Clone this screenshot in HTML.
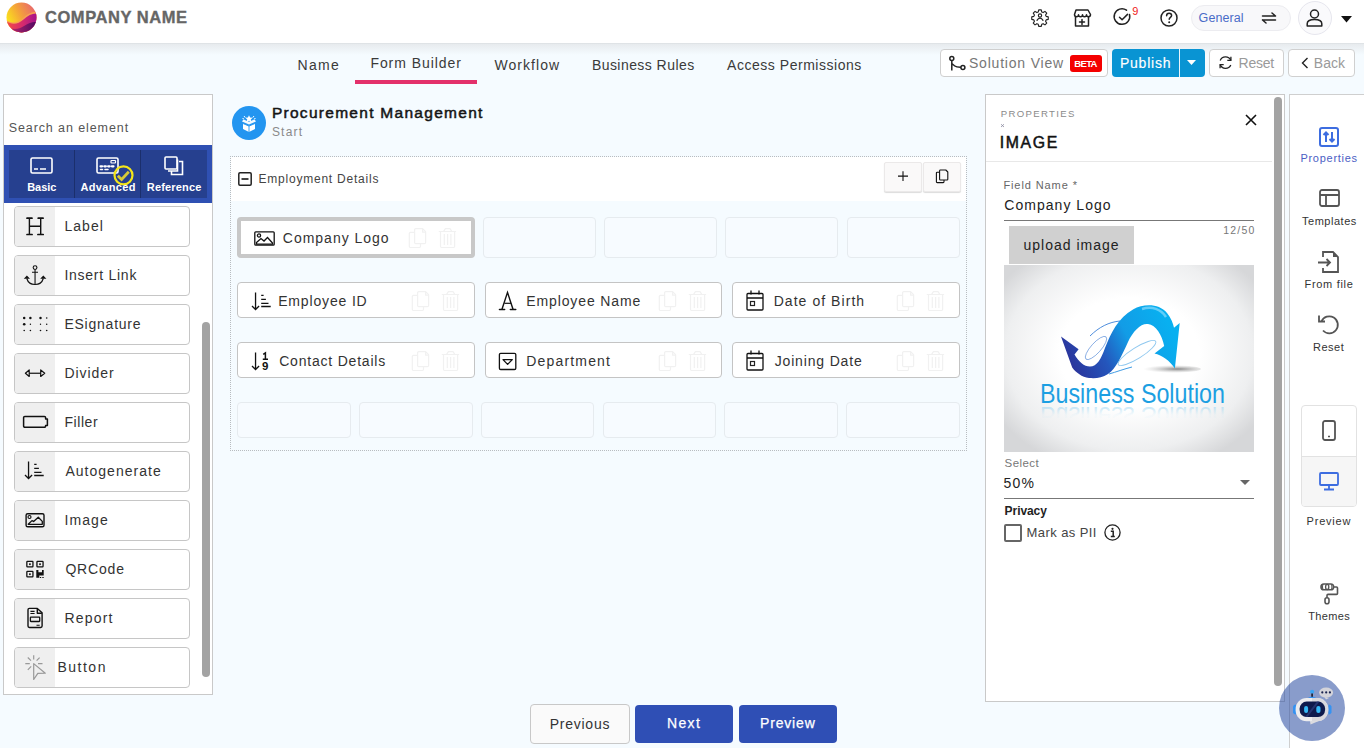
<!DOCTYPE html><html><head><meta charset="utf-8"><title>Form Builder</title><style>
*{box-sizing:border-box;margin:0;padding:0}
html,body{width:1364px;height:748px;overflow:hidden;background:#f5fbff;font-family:"Liberation Sans",sans-serif;position:relative}
.a{position:absolute}
.t{position:absolute;white-space:nowrap;line-height:1}
svg{position:absolute;overflow:visible}
</style></head><body>
<div class="a" style="left:0;top:0;width:1364px;height:43px;background:#fff"></div>
<div class="a" style="left:0;top:43px;width:1364px;height:1px;background:#dfe3e6"></div>
<div class="a" style="left:0;top:44px;width:1364px;height:11px;background:linear-gradient(#e7ebee,#f5fbff)"></div>
<svg style="left:6px;top:2px" width="31" height="31" viewBox="0 0 31 31">
<defs>
<linearGradient id="lg1" x1="0" y1="0.6" x2="1" y2="0.1"><stop offset="0" stop-color="#fbe81a"/><stop offset="0.45" stop-color="#f4a23a"/><stop offset="1" stop-color="#e65a78"/></linearGradient>
<linearGradient id="lg2" x1="0" y1="0" x2="1" y2="0"><stop offset="0" stop-color="#f54b45"/><stop offset="0.55" stop-color="#d52a6e"/><stop offset="1" stop-color="#a4128e"/></linearGradient>
<linearGradient id="lg3" x1="0" y1="0" x2="1" y2="0"><stop offset="0" stop-color="#c8286e"/><stop offset="1" stop-color="#4e0a62"/></linearGradient>
<clipPath id="lc"><circle cx="15.5" cy="15.5" r="15"/></clipPath>
</defs>
<g clip-path="url(#lc)">
<rect width="31" height="31" fill="url(#lg1)"/>
<path d="M0 18 C6 22 12 21 17 16 C22 11 27 9.5 31 10 L31 31 L0 31Z" fill="#f7a052"/>
<path d="M0 19.2 C6 23 12 22.5 17.5 17.5 C22 13 27 11 31 11.5 L31 31 L0 31Z" fill="url(#lg2)"/>
<path d="M0 24 C6 28 12 28 18 24 C23 20.5 27 19.5 31 20 L31 31 L0 31Z" fill="url(#lg3)"/>
</g></svg>
<div class="t" style="left:45.00px;top:8.72px;font-size:16.5px;font-weight:bold;color:#666;letter-spacing:0.545px;-webkit-text-stroke:0.35px #666;">COMPANY NAME</div>
<svg style="left:1031px;top:8px" width="18" height="18" viewBox="0 0 24 24"><path stroke="#222" stroke-width="1.5" fill="none" stroke-linecap="round" stroke-linejoin="round" d="M10.3 2.5h3.4l.6 2.8 1.9.8 2.4-1.6 2.4 2.4-1.6 2.4.8 1.9 2.8.6v3.4l-2.8.6-.8 1.9 1.6 2.4-2.4 2.4-2.4-1.6-1.9.8-.6 2.8h-3.4l-.6-2.8-1.9-.8-2.4 1.6-2.4-2.4 1.6-2.4-.8-1.9-2.8-.6v-3.4l2.8-.6.8-1.9-1.6-2.4 2.4-2.4 2.4 1.6 1.9-.8z"/><circle stroke="#222" stroke-width="1.5" fill="none" stroke-linecap="round" stroke-linejoin="round" cx="12" cy="10" r="2.2"/><path stroke="#222" stroke-width="1.5" fill="none" stroke-linecap="round" stroke-linejoin="round" d="M8 16.5c1-2 2.3-3 4-3s3 1 4 3"/></svg>
<svg style="left:1072px;top:9px" width="20" height="18" viewBox="0 0 20 18"><path stroke="#222" stroke-width="1.5" fill="none" stroke-linecap="round" stroke-linejoin="round" d="M4 1h12l2.5 4.5c0 1.5-1 2.2-2 2.2s-2-.8-2-2c0 1.2-1 2-2 2s-2-.8-2-2c0 1.2-1 2-2 2s-2-.8-2-2c0 1.2-1 2-2 2s-2-.7-2-2.2z"/><path stroke="#222" stroke-width="1.5" fill="none" stroke-linecap="round" stroke-linejoin="round" d="M3.5 8v9h13V8"/><path stroke="#222" stroke-width="1.5" fill="none" stroke-linecap="round" stroke-linejoin="round" d="M10 10.5v5M7.5 13h5"/></svg>
<svg style="left:1114px;top:8px" width="18" height="18" viewBox="0 0 18 18"><path stroke="#222" stroke-width="1.5" fill="none" stroke-linecap="round" stroke-linejoin="round" d="M15.5 6.5A7.8 7.8 0 1 1 12.5 2.2"/><path stroke="#222" stroke-width="1.5" fill="none" stroke-linecap="round" stroke-linejoin="round" d="M5.5 9.2l2.6 2.6 5.4-5.4"/></svg>
<div class="t" style="left:1132.30px;top:5.65px;font-size:11px;font-weight:normal;color:#f01818;letter-spacing:0.200px;">9</div>
<svg style="left:1160px;top:9px" width="18" height="18" viewBox="0 0 18 18"><circle stroke="#222" stroke-width="1.5" fill="none" stroke-linecap="round" stroke-linejoin="round" cx="9" cy="9" r="8"/><path stroke="#222" stroke-width="1.5" fill="none" stroke-linecap="round" stroke-linejoin="round" d="M6.6 6.8c0-1.5 1.1-2.5 2.5-2.5s2.5 1 2.5 2.3c0 1.6-2.4 2-2.4 3.7"/><circle cx="9.2" cy="13.3" r="1" fill="#222"/></svg>
<div class="a" style="left:1191px;top:5px;width:100px;height:26px;border-radius:13px;background:#f8f8fa;border:1px solid #ececf0"></div>
<div class="t" style="left:1198.60px;top:12.12px;font-size:12.5px;font-weight:normal;color:#4a6cc8;letter-spacing:0.083px;">General</div>
<svg style="left:1261px;top:12px" width="16" height="12" viewBox="0 0 16 12"><path stroke="#222" stroke-width="1.5" fill="none" stroke-linecap="round" stroke-linejoin="round" d="M1.5 4h13M11 1l3.5 3M14.5 8h-13M5 11L1.5 8"/></svg>
<div class="a" style="left:1298px;top:1px;width:34px;height:34px;border-radius:50%;background:#fafafc;border:1px solid #e6e6ee"></div>
<svg style="left:1306px;top:9px" width="17" height="18" viewBox="0 0 17 18"><circle stroke="#222" stroke-width="1.5" fill="none" stroke-linecap="round" stroke-linejoin="round" stroke-width="1.45" cx="8.5" cy="5" r="4"/><path stroke="#222" stroke-width="1.5" fill="none" stroke-linecap="round" stroke-linejoin="round" stroke-width="1.45" d="M1.2 17v-2.2c0-2.5 2.5-4.3 7.3-4.3s7.3 1.8 7.3 4.3V17z"/></svg>
<svg style="left:1341px;top:16px" width="11" height="7" viewBox="0 0 11 7"><path d="M0 0h11L5.5 6.5z" fill="#111"/></svg>
<div class="t" style="left:297.50px;top:58.00px;font-size:14px;font-weight:normal;color:#3a3a3a;letter-spacing:1.333px;">Name</div>
<div class="t" style="left:370.40px;top:55.80px;font-size:14px;font-weight:normal;color:#3a3a3a;letter-spacing:0.945px;">Form Builder</div>
<div class="t" style="left:494.50px;top:57.90px;font-size:14px;font-weight:normal;color:#3a3a3a;letter-spacing:1.043px;">Workflow</div>
<div class="t" style="left:591.90px;top:57.90px;font-size:14px;font-weight:normal;color:#3a3a3a;letter-spacing:0.446px;">Business Rules</div>
<div class="t" style="left:727.10px;top:57.90px;font-size:14px;font-weight:normal;color:#3a3a3a;letter-spacing:0.524px;">Access Permissions</div>
<div class="a" style="left:355px;top:80px;width:122px;height:4px;background:#e3306b"></div>
<div class="a" style="left:940px;top:49px;width:168px;height:28px;border:1px solid #cfcfcf;border-radius:4px;background:#fff"></div>
<svg style="left:949px;top:56px" width="17" height="15" viewBox="0 0 17 15"><circle cx="2.8" cy="2.5" r="2" fill="none" stroke="#222" stroke-width="1.5"/><circle cx="13.9" cy="11.5" r="2" fill="none" stroke="#222" stroke-width="1.5"/><path d="M2.8 4.5V14.5M2.8 7.5l3 2.5c1.5 1.2 3 1.3 5.4 1.3h.7" fill="none" stroke="#222" stroke-width="1.5"/></svg>
<div class="t" style="left:968.90px;top:55.70px;font-size:14px;font-weight:normal;color:#777;letter-spacing:0.808px;">Solution View</div>
<div class="a" style="left:1070px;top:55px;width:32px;height:17px;background:#f40000;border-radius:3px"></div>
<div class="t" style="left:1074.30px;top:58.88px;font-size:9.5px;font-weight:bold;color:#fff;letter-spacing:-0.667px;">BETA</div>
<div class="a" style="left:1112px;top:49px;width:93px;height:28px;background:#0994d3;border-radius:4px"></div>
<div class="a" style="left:1179px;top:49px;width:1px;height:28px;background:#e8f4fb"></div>
<div class="t" style="left:1120.00px;top:55.70px;font-size:14px;font-weight:normal;color:#fff;letter-spacing:0.750px;-webkit-text-stroke:0.15px #fff;">Publish</div>
<svg style="left:1187px;top:60px" width="9" height="5" viewBox="0 0 9 5"><path d="M0 0h9L4.5 5z" fill="#fff"/></svg>
<div class="a" style="left:1209px;top:49px;width:75px;height:28px;border:1px solid #d0d0d0;border-radius:4px;background:#fff"></div>
<svg style="left:1218px;top:55px" width="15" height="15" viewBox="0 0 15 15"><path d="M12.8 5.2A5.8 5.8 0 0 0 2.2 5.5M2.2 9.8a5.8 5.8 0 0 0 10.6.2" fill="none" stroke="#222" stroke-width="1.3"/><path d="M12.9 1.8v3.6H9.3M2.1 13.2V9.6h3.6" fill="none" stroke="#222" stroke-width="1.3"/></svg>
<div class="t" style="left:1238.50px;top:55.70px;font-size:14px;font-weight:normal;color:#9a9a9a;letter-spacing:-0.225px;">Reset</div>
<div class="a" style="left:1288px;top:49px;width:67px;height:28px;border:1px solid #d0d0d0;border-radius:4px;background:#fff"></div>
<svg style="left:1301px;top:57px" width="8" height="12" viewBox="0 0 8 12"><path d="M6.5 1L1.5 6l5 5" fill="none" stroke="#222" stroke-width="1.4"/></svg>
<div class="t" style="left:1313.80px;top:55.70px;font-size:14px;font-weight:normal;color:#9a9a9a;letter-spacing:0.067px;">Back</div>
<div class="a" style="left:3px;top:94px;width:210px;height:601px;background:#fff;border:1px solid #c9c9c9"></div>
<div class="t" style="left:8.70px;top:122.03px;font-size:12.5px;font-weight:normal;color:#555;letter-spacing:0.906px;">Search an element</div>
<div class="a" style="left:4px;top:145px;width:208px;height:58px;background:#2f50b3"></div>
<div class="a" style="left:9px;top:150px;width:198px;height:48px;background:#26408f"></div>
<div class="a" style="left:74px;top:150px;width:1px;height:48px;background:#1b2f6c"></div>
<div class="a" style="left:140px;top:150px;width:1px;height:48px;background:#1b2f6c"></div>
<svg style="left:30px;top:157px" width="23" height="17" viewBox="0 0 23 17"><rect stroke="#fff" stroke-width="1.6" fill="none" x="1" y="1" width="21" height="15" rx="1.5"/><path stroke="#fff" stroke-width="1.6" fill="none" d="M4 12h4M10 12h6"/></svg>
<svg style="left:96px;top:157px" width="23" height="17" viewBox="0 0 23 17"><rect stroke="#fff" stroke-width="1.6" fill="none" x="1" y="1" width="21" height="15" rx="1.5"/><rect x="15" y="3.5" width="4.5" height="2.5" rx=".5" fill="none" stroke="#fff" stroke-width="1.2"/><path stroke="#fff" stroke-width="2.2" stroke-linecap="round" d="M4.5 9.3h1.6M8.3 9.3h1.6M12.1 9.3h1.6M15.9 9.3h1.6"/><path stroke="#fff" stroke-width="1.5" stroke-linecap="round" d="M4.5 12.6h2M9 12.6h3"/></svg>
<svg style="left:164px;top:156px" width="20" height="20" viewBox="0 0 20 20"><rect stroke="#fff" stroke-width="1.6" fill="none" x="1" y="1" width="12" height="12" rx="1"/><path stroke="#fff" stroke-width="1.6" fill="none" d="M15 5.5h3.5v13h-11V15"/><path stroke="#fff" stroke-width="1.6" fill="none" d="M13.5 3.5v11.5H4"/></svg>
<svg style="left:113px;top:165px" width="21" height="21" viewBox="0 0 21 21"><circle cx="10.5" cy="10.3" r="9" fill="none" stroke="#f4e61a" stroke-width="2.2"/><path d="M4.8 10.8l3.8 3.6 7.2-7.6" fill="none" stroke="#d8ca36" stroke-width="2.8"/></svg>
<div class="t" style="left:27.20px;top:182.35px;font-size:11px;font-weight:bold;color:#fff;letter-spacing:-0.050px;">Basic</div>
<div class="t" style="left:80.40px;top:181.55px;font-size:11px;font-weight:bold;color:#fff;letter-spacing:0.343px;">Advanced</div>
<div class="t" style="left:146.80px;top:182.15px;font-size:11px;font-weight:bold;color:#fff;letter-spacing:0.175px;">Reference</div>
<div class="a" style="left:14px;top:206px;width:176px;height:41px;border:1px solid #c6c6c6;border-radius:4px;background:#fff;overflow:hidden"><div class="a" style="left:0;top:0;width:40px;height:39px;background:#efefef"></div></div>
<svg style="left:20px;top:212px" width="30" height="30" viewBox="0 0 30 30"><g stroke="#111" fill="none"><path stroke-width="1.4" d="M9.4 6.2V22.5M20.7 6.2V22.5M9.4 14.2H20.7"/><path stroke-width="1.7" stroke-linecap="round" d="M7 6.2H12M18.2 6.2H23.1M7 22.5H12.1M17.9 22.5H23.2"/></g></svg>
<div class="t" style="left:64.40px;top:219.30px;font-size:14px;font-weight:normal;color:#333;letter-spacing:1.050px;">Label</div>
<div class="a" style="left:14px;top:255px;width:176px;height:41px;border:1px solid #c6c6c6;border-radius:4px;background:#fff;overflow:hidden"><div class="a" style="left:0;top:0;width:40px;height:39px;background:#efefef"></div></div>
<svg style="left:18px;top:260px" width="34" height="30" viewBox="0 0 34 30"><g stroke="#111" fill="none"><circle cx="17.05" cy="7.6" r="1.9" stroke-width="1.1"/><path stroke-width="1.1" d="M14 12.2H20M17.05 9.5V24.4"/><path stroke-width="1.2" d="M8.8 18.5C10 22.5 13 24.5 17.05 24.5S24.1 22.5 25.3 18.5"/></g><path d="M8.9 15.6L12 18.7H5.8zM25.3 15.6L28.4 18.7H22.2z" fill="#111"/></svg>
<div class="t" style="left:64.40px;top:268.30px;font-size:14px;font-weight:normal;color:#333;letter-spacing:0.740px;">Insert Link</div>
<div class="a" style="left:14px;top:304px;width:176px;height:41px;border:1px solid #c6c6c6;border-radius:4px;background:#fff;overflow:hidden"><div class="a" style="left:0;top:0;width:40px;height:39px;background:#efefef"></div></div>
<svg style="left:18px;top:310px" width="34" height="30" viewBox="0 0 34 30"><g fill="#111"><circle cx="6.2" cy="8" r="1.25"/><circle cx="12.4" cy="8" r="1.25"/><circle cx="22.5" cy="8" r="1.25"/><circle cx="28.7" cy="8" r="0.8"/><circle cx="6.2" cy="14.2" r="1.3"/><circle cx="12.4" cy="14.2" r="0.7"/><circle cx="22.5" cy="14.2" r="0.7"/><circle cx="28.7" cy="14.2" r="0.75"/><circle cx="6.2" cy="20.5" r="0.8"/><circle cx="12.4" cy="20.5" r="0.8"/><circle cx="22.5" cy="20.5" r="0.8"/><circle cx="28.7" cy="20.5" r="0.8"/></g></svg>
<div class="t" style="left:64.40px;top:317.30px;font-size:14px;font-weight:normal;color:#333;letter-spacing:0.767px;">ESignature</div>
<div class="a" style="left:14px;top:353px;width:176px;height:41px;border:1px solid #c6c6c6;border-radius:4px;background:#fff;overflow:hidden"><div class="a" style="left:0;top:0;width:40px;height:39px;background:#efefef"></div></div>
<svg style="left:18px;top:358px" width="34" height="30" viewBox="0 0 34 30"><g stroke="#111" stroke-width="1.2" fill="none" stroke-linejoin="round"><path d="M11.2 15.25H22.7"/><path d="M7.4 15.25L11.2 12V18.5z"/><path d="M26.7 15.25L22.7 12V18.5z"/></g></svg>
<div class="t" style="left:64.40px;top:366.30px;font-size:14px;font-weight:normal;color:#333;letter-spacing:0.950px;">Divider</div>
<div class="a" style="left:14px;top:402px;width:176px;height:41px;border:1px solid #c6c6c6;border-radius:4px;background:#fff;overflow:hidden"><div class="a" style="left:0;top:0;width:40px;height:39px;background:#efefef"></div></div>
<svg style="left:18px;top:407px" width="34" height="30" viewBox="0 0 34 30"><path d="M6.8 9.4H26.4a1.2 1.2 0 0 1 1.2 1.2V12H29.4V18.5H27.6V19.1a1.2 1.2 0 0 1-1.2 1.2H6.8a1.2 1.2 0 0 1-1.2-1.2V10.6a1.2 1.2 0 0 1 1.2-1.2z" fill="none" stroke="#111" stroke-width="1.5" stroke-linejoin="round"/></svg>
<div class="t" style="left:64.40px;top:415.30px;font-size:14px;font-weight:normal;color:#333;letter-spacing:0.580px;">Filler</div>
<div class="a" style="left:14px;top:451px;width:176px;height:41px;border:1px solid #c6c6c6;border-radius:4px;background:#fff;overflow:hidden"><div class="a" style="left:0;top:0;width:40px;height:39px;background:#efefef"></div></div>
<svg style="left:19px;top:456px" width="28" height="28" viewBox="0 0 28 28"><g stroke="#111" stroke-width="1.3" fill="none"><path d="M9.55 5.6V22M6 19l3.55 3.5L13.1 19"/><path d="M15.2 8.4H17.6M15.2 12.4H19.9M15.2 16.3H22.5M15.2 19.5H24.7"/></g></svg>
<div class="t" style="left:65.40px;top:464.30px;font-size:14px;font-weight:normal;color:#333;letter-spacing:1.027px;">Autogenerate</div>
<div class="a" style="left:14px;top:500px;width:176px;height:41px;border:1px solid #c6c6c6;border-radius:4px;background:#fff;overflow:hidden"><div class="a" style="left:0;top:0;width:40px;height:39px;background:#efefef"></div></div>
<svg style="left:18px;top:505px" width="34" height="30" viewBox="0 0 34 30"><g fill="none" stroke="#111" stroke-linejoin="round"><rect x="8.1" y="8.7" width="17.9" height="13.1" rx="1.6" stroke-width="1.4"/><circle cx="11.5" cy="12" r="1.5" stroke-width="1.2"/><path d="M10.2 19.2L14 15.6L15.6 16.5L20.3 12.2L24.3 16.4V19.3H10.2z" stroke-width="1.3"/></g></svg>
<div class="t" style="left:64.40px;top:513.30px;font-size:14px;font-weight:normal;color:#333;letter-spacing:1.100px;">Image</div>
<div class="a" style="left:14px;top:549px;width:176px;height:41px;border:1px solid #c6c6c6;border-radius:4px;background:#fff;overflow:hidden"><div class="a" style="left:0;top:0;width:40px;height:39px;background:#efefef"></div></div>
<svg style="left:18px;top:554px" width="34" height="30" viewBox="0 0 34 30"><g fill="none" stroke="#111" stroke-width="1.3"><rect x="8.85" y="7.45" width="6.1" height="5.5" rx=".6"/><rect x="18.95" y="7.45" width="6.1" height="5.5" rx=".6"/><rect x="8.85" y="17.45" width="6.1" height="5.5" rx=".6"/></g><g fill="#111"><rect x="11.1" y="9.3" width="1.6" height="1.8"/><rect x="21.2" y="9.3" width="1.6" height="1.8"/><rect x="11.1" y="19.3" width="1.6" height="1.8"/><path d="M18.3 16.1H20.4V18.3H24V16.1H25.7V21.6H21.3V23.8H18.3z"/><rect x="21.9" y="23" width="1.3" height="1"/><rect x="24.3" y="23" width="1.4" height="1"/></g></svg>
<div class="t" style="left:65.40px;top:562.30px;font-size:14px;font-weight:normal;color:#333;letter-spacing:0.820px;">QRCode</div>
<div class="a" style="left:14px;top:598px;width:176px;height:41px;border:1px solid #c6c6c6;border-radius:4px;background:#fff;overflow:hidden"><div class="a" style="left:0;top:0;width:40px;height:39px;background:#efefef"></div></div>
<svg style="left:18px;top:603px" width="34" height="30" viewBox="0 0 34 30"><g fill="none" stroke="#111" stroke-width="1.4" stroke-linejoin="round"><path d="M11.4 5.4H19.3L24.1 9.8V23.1a1.4 1.4 0 0 1-1.4 1.4H11.4A1.4 1.4 0 0 1 10 23.1V6.8A1.4 1.4 0 0 1 11.4 5.4z"/><path d="M19.3 5.6V10.2H23.9"/><path d="M12.4 8.4H16.6M12.4 10.5H16.6M18.5 22.3H21.7" stroke-width="1.1"/><rect x="12.4" y="14.2" width="9.3" height="4.3" rx=".5" stroke-width="1.3"/></g></svg>
<div class="t" style="left:64.40px;top:611.30px;font-size:14px;font-weight:normal;color:#333;letter-spacing:1.200px;">Report</div>
<div class="a" style="left:14px;top:647px;width:176px;height:41px;border:1px solid #c6c6c6;border-radius:4px;background:#fff;overflow:hidden"><div class="a" style="left:0;top:0;width:40px;height:39px;background:#efefef"></div></div>
<svg style="left:18px;top:650px" width="34" height="34" viewBox="0 0 34 34"><g stroke="#999" stroke-width="1.2" fill="none" stroke-linejoin="round"><path d="M15.7 5.2V9.5M9.8 7.5L13 10.7M21.6 7.7L18.6 10.7M7.3 13.6H11.8M20 13.6H24.5M13.2 16.4L9.8 19.8"/><path d="M15.7 13.6V29.5L19.8 23.4L27.3 23.2z"/></g></svg>
<div class="t" style="left:57.40px;top:660.30px;font-size:14px;font-weight:normal;color:#333;letter-spacing:1.520px;">Button</div>
<div class="a" style="left:202px;top:322px;width:8px;height:355px;border-radius:4px;background:#a3a3a3"></div>
<div class="a" style="left:232px;top:106px;width:34px;height:34px;border-radius:50%;background:#2395f0"></div>
<svg style="left:238px;top:112px" width="22" height="22" viewBox="0 0 22 22"><g fill="#fff">
<path d="M11 3.2l1.1 2.3 2.5.3-1.8 1.7.5 2.5L11 8.8 8.7 10l.5-2.5L7.4 5.8l2.5-.3z"/>
<path d="M4 9.5l7 3 7-3-1.5-2.2-2.5 1.1-3 1.3-3-1.3-2.5-1.1z" opacity=".95"/>
<path d="M5 11.5l6 2.6 6-2.6V17l-6 3-6-3z"/>
<path d="M6 4l1.2 1.6M16 4l-1.2 1.6M4.5 6.5h1.2M16.3 6.5h1.2" stroke="#fff" stroke-width="1"/>
</g><path d="M11 14.1V20M5 11.5l6 2.6 6-2.6" stroke="#2395f0" stroke-width=".9" fill="none"/></svg>
<div class="t" style="left:271.90px;top:104.88px;font-size:15.5px;font-weight:normal;color:#151515;letter-spacing:1.286px;-webkit-text-stroke:0.5px #151515;">Procurement Management</div>
<div class="t" style="left:271.90px;top:125.70px;font-size:12px;font-weight:normal;color:#8a8a8a;letter-spacing:1.225px;">Start</div>
<div class="a" style="left:230px;top:156px;width:737px;height:295px;border:1px dotted #b8bcc0;background:#f5fbff"></div>
<div class="a" style="left:231px;top:157px;width:735px;height:44px;background:#fff"></div>
<svg style="left:238px;top:172px" width="14" height="14" viewBox="0 0 14 14"><rect x=".8" y=".8" width="12.4" height="12.4" rx="1.2" fill="none" stroke="#222" stroke-width="1.5"/><path d="M3.5 7h7" stroke="#444" stroke-width="2"/></svg>
<div class="t" style="left:258.50px;top:172.70px;font-size:12px;font-weight:normal;color:#444;letter-spacing:0.776px;">Employment Details</div>
<div class="a" style="left:884px;top:162px;width:38px;height:30px;background:#faf9f9;border:1px solid #ebe9e9;border-radius:2px;box-shadow:0 1px 1px rgba(0,0,0,0.14)"></div>
<div class="a" style="left:923px;top:162px;width:38px;height:30px;background:#faf9f9;border:1px solid #ebe9e9;border-radius:2px;box-shadow:0 1px 1px rgba(0,0,0,0.14)"></div>
<svg style="left:897px;top:170px" width="12" height="12" viewBox="0 0 12 12"><path d="M6 1.2V11M1 6.1H11" stroke="#111" stroke-width="1.1"/></svg>
<svg style="left:935px;top:169px" width="15" height="15" viewBox="0 0 15 15"><g fill="none" stroke="#111" stroke-width="1.1" stroke-linejoin="round"><path d="M5.4 1H10.8L12.8 3V10.2a.8.8 0 0 1-.8.8H5.4a.8.8 0 0 1-.8-.8V1.8a.8.8 0 0 1 .8-.8z"/><path d="M4.6 3.2H2.2a.8.8 0 0 0-.8.8V12.8a.8.8 0 0 0 .8.8H8.2a.8.8 0 0 0 .8-.8V11"/></g></svg>
<div class="a" style="left:483px;top:217px;width:113px;height:41px;border:1px solid #e6ebef;border-radius:4px;background:#f7fbff"></div>
<div class="a" style="left:604px;top:217px;width:113px;height:41px;border:1px solid #e6ebef;border-radius:4px;background:#f7fbff"></div>
<div class="a" style="left:725px;top:217px;width:113px;height:41px;border:1px solid #e6ebef;border-radius:4px;background:#f7fbff"></div>
<div class="a" style="left:847px;top:217px;width:113px;height:41px;border:1px solid #e6ebef;border-radius:4px;background:#f7fbff"></div>
<div class="a" style="left:237px;top:402px;width:114px;height:36px;border:1px solid #e6ebef;border-radius:4px;background:#f7fbff"></div>
<div class="a" style="left:359px;top:402px;width:114px;height:36px;border:1px solid #e6ebef;border-radius:4px;background:#f7fbff"></div>
<div class="a" style="left:481px;top:402px;width:113px;height:36px;border:1px solid #e6ebef;border-radius:4px;background:#f7fbff"></div>
<div class="a" style="left:603px;top:402px;width:113px;height:36px;border:1px solid #e6ebef;border-radius:4px;background:#f7fbff"></div>
<div class="a" style="left:724px;top:402px;width:114px;height:36px;border:1px solid #e6ebef;border-radius:4px;background:#f7fbff"></div>
<div class="a" style="left:846px;top:402px;width:114px;height:36px;border:1px solid #e6ebef;border-radius:4px;background:#f7fbff"></div>
<div class="a" style="left:237px;top:217px;width:238px;height:41px;border:4px solid #c8c8c8;border-radius:4px;background:#fff"></div>
<svg style="left:254px;top:231px" width="21" height="15" viewBox="0 0 21 15"><rect stroke="#111" stroke-width="1.3" fill="none" x=".8" y=".8" width="19.4" height="13.4" rx="1"/><circle stroke="#111" stroke-width="1.3" fill="none" cx="5" cy="4.5" r="1.6"/><path stroke="#111" stroke-width="1.3" fill="none" d="M2.5 11.5l4.5-4 3 2.5 3.5-3.5 5 5.5v1.2H2.5z"/></svg>
<div class="t" style="left:282.80px;top:230.60px;font-size:14px;font-weight:normal;color:#333;letter-spacing:0.991px;">Company Logo</div>
<svg style="left:404px;top:222px" width="60" height="30" viewBox="0 0 60 30"><g fill="none" stroke="#f1f1f1" stroke-width="1.2" stroke-linejoin="round"><path d="M11.8 6.6H18.6L21.6 9.6V20.4a1.2 1.2 0 0 1-1.2 1.2H11.8a1.2 1.2 0 0 1-1.2-1.2V7.8a1.2 1.2 0 0 1 1.2-1.2z"/><path d="M18.6 6.8V10.2H21.4"/><path d="M10.6 10.3H6.5a1.2 1.2 0 0 0-1.2 1.2V24.3a1.2 1.2 0 0 0 1.2 1.2H15.3a1.2 1.2 0 0 0 1.2-1.2V21.6"/><path d="M34.8 9.5H52.1M39.6 9.3L41.4 6.6H46L47.7 9.3M36.5 9.5V24.3a1.2 1.2 0 0 0 1.2 1.2H49.4a1.2 1.2 0 0 0 1.2-1.2V9.5M40.3 11.9V22.9M43.6 11.9V22.9M46.9 11.9V22.9"/></g></svg>
<div class="a" style="left:237px;top:282px;width:238px;height:36px;border:1px solid #c4c4c4;border-radius:4px;background:#fff"></div>
<div class="t" style="left:278.20px;top:293.90px;font-size:14px;font-weight:normal;color:#333;letter-spacing:0.840px;">Employee ID</div>
<svg style="left:246px;top:287px" width="28" height="28" viewBox="0 0 28 28"><g stroke="#111" stroke-width="1.3" fill="none"><path d="M9.55 5.6V22M6 19l3.55 3.5L13.1 19"/><path d="M15.2 8.4H17.6M15.2 12.4H19.9M15.2 16.3H22.5M15.2 19.5H24.7"/></g></svg>
<svg style="left:407px;top:285px" width="60" height="30" viewBox="0 0 60 30"><g fill="none" stroke="#f1f1f1" stroke-width="1.2" stroke-linejoin="round"><path d="M11.8 6.6H18.6L21.6 9.6V20.4a1.2 1.2 0 0 1-1.2 1.2H11.8a1.2 1.2 0 0 1-1.2-1.2V7.8a1.2 1.2 0 0 1 1.2-1.2z"/><path d="M18.6 6.8V10.2H21.4"/><path d="M10.6 10.3H6.5a1.2 1.2 0 0 0-1.2 1.2V24.3a1.2 1.2 0 0 0 1.2 1.2H15.3a1.2 1.2 0 0 0 1.2-1.2V21.6"/><path d="M34.8 9.5H52.1M39.6 9.3L41.4 6.6H46L47.7 9.3M36.5 9.5V24.3a1.2 1.2 0 0 0 1.2 1.2H49.4a1.2 1.2 0 0 0 1.2-1.2V9.5M40.3 11.9V22.9M43.6 11.9V22.9M46.9 11.9V22.9"/></g></svg>
<div class="a" style="left:485px;top:282px;width:237px;height:36px;border:1px solid #c4c4c4;border-radius:4px;background:#fff"></div>
<div class="t" style="left:526.30px;top:293.90px;font-size:14px;font-weight:normal;color:#333;letter-spacing:0.875px;">Employee Name</div>
<svg style="left:494px;top:287px" width="28" height="28" viewBox="0 0 28 28"><g stroke="#111" fill="none"><path stroke-width="1.4" d="M7.9 22.5L13.5 5.4L19.1 22.5"/><path stroke-width="1.2" d="M10.4 16.3H17.1"/><path stroke-width="1.6" stroke-linecap="round" d="M5.5 22.5H10.6M16.4 22.5H21.7"/></g></svg>
<svg style="left:654px;top:285px" width="60" height="30" viewBox="0 0 60 30"><g fill="none" stroke="#f1f1f1" stroke-width="1.2" stroke-linejoin="round"><path d="M11.8 6.6H18.6L21.6 9.6V20.4a1.2 1.2 0 0 1-1.2 1.2H11.8a1.2 1.2 0 0 1-1.2-1.2V7.8a1.2 1.2 0 0 1 1.2-1.2z"/><path d="M18.6 6.8V10.2H21.4"/><path d="M10.6 10.3H6.5a1.2 1.2 0 0 0-1.2 1.2V24.3a1.2 1.2 0 0 0 1.2 1.2H15.3a1.2 1.2 0 0 0 1.2-1.2V21.6"/><path d="M34.8 9.5H52.1M39.6 9.3L41.4 6.6H46L47.7 9.3M36.5 9.5V24.3a1.2 1.2 0 0 0 1.2 1.2H49.4a1.2 1.2 0 0 0 1.2-1.2V9.5M40.3 11.9V22.9M43.6 11.9V22.9M46.9 11.9V22.9"/></g></svg>
<div class="a" style="left:732px;top:282px;width:228px;height:36px;border:1px solid #c4c4c4;border-radius:4px;background:#fff"></div>
<div class="t" style="left:773.70px;top:293.90px;font-size:14px;font-weight:normal;color:#333;letter-spacing:1.050px;">Date of Birth</div>
<svg style="left:746px;top:290px" width="18" height="21" viewBox="0 0 18 21"><rect stroke="#111" stroke-width="1.3" fill="none" x="1" y="3.5" width="16" height="16.5" rx="1"/><path stroke="#111" stroke-width="1.3" fill="none" d="M1 8h16M5 .5v4M13 .5v4"/><rect x="4.5" y="11.5" width="4" height="4" fill="none" stroke="#222" stroke-width="1.2"/></svg>
<svg style="left:892px;top:285px" width="60" height="30" viewBox="0 0 60 30"><g fill="none" stroke="#f1f1f1" stroke-width="1.2" stroke-linejoin="round"><path d="M11.8 6.6H18.6L21.6 9.6V20.4a1.2 1.2 0 0 1-1.2 1.2H11.8a1.2 1.2 0 0 1-1.2-1.2V7.8a1.2 1.2 0 0 1 1.2-1.2z"/><path d="M18.6 6.8V10.2H21.4"/><path d="M10.6 10.3H6.5a1.2 1.2 0 0 0-1.2 1.2V24.3a1.2 1.2 0 0 0 1.2 1.2H15.3a1.2 1.2 0 0 0 1.2-1.2V21.6"/><path d="M34.8 9.5H52.1M39.6 9.3L41.4 6.6H46L47.7 9.3M36.5 9.5V24.3a1.2 1.2 0 0 0 1.2 1.2H49.4a1.2 1.2 0 0 0 1.2-1.2V9.5M40.3 11.9V22.9M43.6 11.9V22.9M46.9 11.9V22.9"/></g></svg>
<div class="a" style="left:237px;top:342px;width:238px;height:36px;border:1px solid #c4c4c4;border-radius:4px;background:#fff"></div>
<div class="t" style="left:279.20px;top:353.90px;font-size:14px;font-weight:normal;color:#333;letter-spacing:0.793px;">Contact Details</div>
<svg style="left:246px;top:347px" width="28" height="28" viewBox="0 0 28 28"><g stroke="#111" stroke-width="1.3" fill="none"><path d="M9.55 5.6V22M6 19l3.55 3.5L13.1 19"/><path stroke-width="1.5" d="M17.2 7.3L19.4 5.9V12.3M16.8 12.2H22"/></g><text x="19.1" y="22.8" text-anchor="middle" font-family="Liberation Sans" font-weight="bold" font-size="11.5" fill="#111">9</text></svg>
<svg style="left:407px;top:345px" width="60" height="30" viewBox="0 0 60 30"><g fill="none" stroke="#f1f1f1" stroke-width="1.2" stroke-linejoin="round"><path d="M11.8 6.6H18.6L21.6 9.6V20.4a1.2 1.2 0 0 1-1.2 1.2H11.8a1.2 1.2 0 0 1-1.2-1.2V7.8a1.2 1.2 0 0 1 1.2-1.2z"/><path d="M18.6 6.8V10.2H21.4"/><path d="M10.6 10.3H6.5a1.2 1.2 0 0 0-1.2 1.2V24.3a1.2 1.2 0 0 0 1.2 1.2H15.3a1.2 1.2 0 0 0 1.2-1.2V21.6"/><path d="M34.8 9.5H52.1M39.6 9.3L41.4 6.6H46L47.7 9.3M36.5 9.5V24.3a1.2 1.2 0 0 0 1.2 1.2H49.4a1.2 1.2 0 0 0 1.2-1.2V9.5M40.3 11.9V22.9M43.6 11.9V22.9M46.9 11.9V22.9"/></g></svg>
<div class="a" style="left:485px;top:342px;width:237px;height:36px;border:1px solid #c4c4c4;border-radius:4px;background:#fff"></div>
<div class="t" style="left:526.30px;top:353.90px;font-size:14px;font-weight:normal;color:#333;letter-spacing:1.167px;">Department</div>
<svg style="left:492px;top:346px" width="30" height="30" viewBox="0 0 30 30"><g fill="none" stroke="#111" stroke-width="1.3" stroke-linejoin="round"><rect x="7.4" y="7.3" width="16.4" height="16.2" rx="1.3"/><path d="M11 13.6H20.3L15.6 18.4z"/></g></svg>
<svg style="left:654px;top:345px" width="60" height="30" viewBox="0 0 60 30"><g fill="none" stroke="#f1f1f1" stroke-width="1.2" stroke-linejoin="round"><path d="M11.8 6.6H18.6L21.6 9.6V20.4a1.2 1.2 0 0 1-1.2 1.2H11.8a1.2 1.2 0 0 1-1.2-1.2V7.8a1.2 1.2 0 0 1 1.2-1.2z"/><path d="M18.6 6.8V10.2H21.4"/><path d="M10.6 10.3H6.5a1.2 1.2 0 0 0-1.2 1.2V24.3a1.2 1.2 0 0 0 1.2 1.2H15.3a1.2 1.2 0 0 0 1.2-1.2V21.6"/><path d="M34.8 9.5H52.1M39.6 9.3L41.4 6.6H46L47.7 9.3M36.5 9.5V24.3a1.2 1.2 0 0 0 1.2 1.2H49.4a1.2 1.2 0 0 0 1.2-1.2V9.5M40.3 11.9V22.9M43.6 11.9V22.9M46.9 11.9V22.9"/></g></svg>
<div class="a" style="left:732px;top:342px;width:228px;height:36px;border:1px solid #c4c4c4;border-radius:4px;background:#fff"></div>
<div class="t" style="left:774.70px;top:353.90px;font-size:14px;font-weight:normal;color:#333;letter-spacing:0.836px;">Joining Date</div>
<svg style="left:746px;top:350px" width="18" height="21" viewBox="0 0 18 21"><rect stroke="#111" stroke-width="1.3" fill="none" x="1" y="3.5" width="16" height="16.5" rx="1"/><path stroke="#111" stroke-width="1.3" fill="none" d="M1 8h16M5 .5v4M13 .5v4"/><rect x="4.5" y="11.5" width="4" height="4" fill="none" stroke="#222" stroke-width="1.2"/></svg>
<svg style="left:892px;top:345px" width="60" height="30" viewBox="0 0 60 30"><g fill="none" stroke="#f1f1f1" stroke-width="1.2" stroke-linejoin="round"><path d="M11.8 6.6H18.6L21.6 9.6V20.4a1.2 1.2 0 0 1-1.2 1.2H11.8a1.2 1.2 0 0 1-1.2-1.2V7.8a1.2 1.2 0 0 1 1.2-1.2z"/><path d="M18.6 6.8V10.2H21.4"/><path d="M10.6 10.3H6.5a1.2 1.2 0 0 0-1.2 1.2V24.3a1.2 1.2 0 0 0 1.2 1.2H15.3a1.2 1.2 0 0 0 1.2-1.2V21.6"/><path d="M34.8 9.5H52.1M39.6 9.3L41.4 6.6H46L47.7 9.3M36.5 9.5V24.3a1.2 1.2 0 0 0 1.2 1.2H49.4a1.2 1.2 0 0 0 1.2-1.2V9.5M40.3 11.9V22.9M43.6 11.9V22.9M46.9 11.9V22.9"/></g></svg>
<div class="a" style="left:985px;top:94px;width:300px;height:608px;background:#fff;border:1px solid #c9c9c9"></div>
<div class="t" style="left:1000.70px;top:109.16px;font-size:9.6px;font-weight:normal;color:#8a8a8a;letter-spacing:1.333px;">PROPERTIES</div>
<svg style="left:1000px;top:123px" width="5" height="5" viewBox="0 0 5 5"><path d="M1 1.2l3 2.8M4 1.2L1 4" stroke="#8a8aa0" stroke-width=".8"/></svg>
<div class="t" style="left:999.70px;top:134.63px;font-size:15.8px;font-weight:normal;color:#111;letter-spacing:1.675px;-webkit-text-stroke:0.5px #111;">IMAGE</div>
<svg style="left:1245px;top:114px" width="12" height="12" viewBox="0 0 12 12"><path d="M1 1l10 10M11 1L1 11" stroke="#111" stroke-width="1.6"/></svg>
<div class="a" style="left:986px;top:161px;width:286px;height:1px;background:#e8e8e8"></div>
<div class="t" style="left:1003.40px;top:179.95px;font-size:11px;font-weight:normal;color:#666;letter-spacing:0.909px;">Field Name *</div>
<div class="t" style="left:1004.30px;top:197.50px;font-size:14px;font-weight:normal;color:#222;letter-spacing:1.027px;">Company Logo</div>
<div class="a" style="left:1004px;top:220px;width:250px;height:1px;background:#777"></div>
<div class="t" style="left:1223.30px;top:224.93px;font-size:10.5px;font-weight:normal;color:#777;letter-spacing:1.175px;">12/50</div>
<div class="a" style="left:1009px;top:226px;width:125px;height:38px;background:#d0d0d0"></div>
<div class="t" style="left:1023.50px;top:238.40px;font-size:14px;font-weight:normal;color:#222;letter-spacing:1.009px;">upload image</div>
<svg style="left:1004px;top:265px" width="250" height="187" viewBox="0 0 250 187">
<defs>
<radialGradient id="bg" cx="0.5" cy="0.47" r="0.62" fx="0.5" fy="0.47" gradientTransform="translate(0.5 0.47) scale(1 1.05) translate(-0.5 -0.47)"><stop offset="0.45" stop-color="#ffffff"/><stop offset="0.8" stop-color="#eeeff0"/><stop offset="1" stop-color="#d6d7d9"/></radialGradient>
<linearGradient id="ar1" gradientUnits="userSpaceOnUse" x1="60" y1="100" x2="160" y2="50"><stop offset="0" stop-color="#2c2f96"/><stop offset="0.35" stop-color="#2456bc"/><stop offset="0.62" stop-color="#129ce6"/><stop offset="1" stop-color="#08b0f0"/></linearGradient>
<linearGradient id="refl" x1="0" y1="0" x2="0" y2="1"><stop offset="0" stop-color="#8fd0f0" stop-opacity="0"/><stop offset="0.55" stop-color="#8fd0f0" stop-opacity="0.05"/><stop offset="1" stop-color="#7cc8f0" stop-opacity=".8"/></linearGradient>
<radialGradient id="sh" cx="0.65" cy="0.5" r="0.5"><stop offset="0" stop-color="#707070" stop-opacity=".85"/><stop offset="1" stop-color="#bbb" stop-opacity="0"/></radialGradient>
</defs>
<rect width="250" height="187" fill="url(#bg)"/>
<ellipse cx="163" cy="104" rx="34" ry="4" fill="url(#sh)"/>
<path d="M57,71.4 L74.6,84.2 L70.5,89.5 C75,97 80,101.5 86,101.5 C93,101.5 97,94 101,83 C107,68 114,53 129,44.5 C140,38.5 155,38.5 163,48 C167,53 169,58 170,62.8 L175.7,58 L170.9,103.4 C166,96 158,90 150.5,88.5 L160.2,81 C158,70 152,60 144,59 C137,58 129,66 124,77 C118,90 112,104 104,109 C98,113 92,113.5 85,113 C78,112 72,107.5 68.2,102.4 Z" fill="url(#ar1)"/>
<path d="M138,44 C148,41 157,44 162,52" stroke="#9ee2ff" stroke-width="2.5" fill="none" opacity=".6"/>
<g fill="none" stroke-width=".9">
<path d="M86,71 C95,62 105,57 116,56" stroke="#3a80d8"/>
<ellipse cx="92" cy="83" rx="15" ry="5" transform="rotate(-48 92 83)" stroke="#2468cc" opacity=".55"/>
<ellipse cx="133" cy="88" rx="22" ry="5.5" transform="rotate(-32 133 88)" stroke="#1c90e0" opacity=".5"/>
<path d="M105,109 C112,107 120,104 128,102" stroke="#2a90e0"/>
</g>
<text x="36" y="137.5" font-family="Liberation Sans" font-size="28.5" fill="#1c9fe2" textLength="185" lengthAdjust="spacingAndGlyphs">Business Solution</text>
<clipPath id="rc"><rect x="0" y="139" width="250" height="14"/></clipPath><g clip-path="url(#rc)"><g transform="translate(0,279) scale(1,-1)"><text x="36" y="137.5" font-family="Liberation Sans" font-size="28.5" fill="url(#refl)" textLength="185" lengthAdjust="spacingAndGlyphs">Business Solution</text></g></g>
<rect x="0" y="153" width="250" height="34" fill="url(#bg)" opacity="0"/>
</svg>
<div class="t" style="left:1004.60px;top:457.77px;font-size:11.5px;font-weight:normal;color:#777;letter-spacing:0.440px;">Select</div>
<div class="t" style="left:1003.60px;top:475.80px;font-size:14px;font-weight:normal;color:#222;letter-spacing:1.200px;">50%</div>
<svg style="left:1240px;top:480px" width="10" height="5" viewBox="0 0 10 5"><path d="M0 0h10L5 5z" fill="#666"/></svg>
<div class="a" style="left:1004px;top:498px;width:250px;height:1px;background:#777"></div>
<div class="t" style="left:1004.60px;top:505.10px;font-size:12px;font-weight:bold;color:#222;letter-spacing:-0.067px;">Privacy</div>
<div class="a" style="left:1004px;top:524px;width:18px;height:18px;border:2px solid #666;border-radius:2px"></div>
<div class="t" style="left:1026.60px;top:526.25px;font-size:13px;font-weight:normal;color:#444;letter-spacing:0.410px;">Mark as PII</div>
<svg style="left:1104px;top:524px" width="17" height="17" viewBox="0 0 17 17"><circle cx="8.5" cy="8.5" r="7.6" fill="none" stroke="#222" stroke-width="1.3"/><circle cx="8.5" cy="4.8" r="1.1" fill="#222"/><path d="M6.8 7.2h2.4v5.3M6.8 12.6h4" stroke="#222" stroke-width="1.5" fill="none"/></svg>
<div class="a" style="left:1274px;top:97px;width:8px;height:589px;border-radius:4px;background:#a3a3a3"></div>
<div class="a" style="left:1289px;top:94px;width:80px;height:660px;background:#fff;border:1px solid #cfcfcf"></div>
<svg style="left:1319px;top:127px" width="20" height="20" viewBox="0 0 20 20"><rect x="1" y="1" width="18" height="18" rx="2" fill="none" stroke="#3d6de0" stroke-width="2"/><path d="M7 15V5.5M4.5 8L7 5.5 9.5 8M13 5v9.5M10.5 12l2.5 2.5 2.5-2.5" fill="none" stroke="#3d6de0" stroke-width="2"/></svg>
<div class="t" style="left:1300.40px;top:152.55px;font-size:11px;font-weight:normal;color:#4b5ec4;letter-spacing:0.733px;">Properties</div>
<svg style="left:1319px;top:189px" width="21" height="18" viewBox="0 0 21 18"><rect stroke="#555" stroke-width="1.8" fill="none" x="1" y="1" width="19" height="16" rx="2"/><path stroke="#555" stroke-width="1.8" fill="none" d="M1 6h19M7 6v11"/></svg>
<div class="t" style="left:1302.00px;top:215.65px;font-size:11px;font-weight:normal;color:#333;letter-spacing:0.525px;">Templates</div>
<svg style="left:1317px;top:251px" width="23" height="22" viewBox="0 0 23 22"><path stroke="#555" stroke-width="1.8" fill="none" d="M6 6V1h10l5 5v15H6v-4"/><path d="M16 1v5h5" fill="#555"/><path stroke="#555" stroke-width="1.8" fill="none" d="M1 11.5h12M9.5 8l3.5 3.5-3.5 3.5"/></svg>
<div class="t" style="left:1304.60px;top:279.35px;font-size:11px;font-weight:normal;color:#333;letter-spacing:0.675px;">From file</div>
<svg style="left:1317px;top:313px" width="23" height="23" viewBox="0 0 23 23"><path stroke="#555" stroke-width="1.8" fill="none" d="M4.5 8.5A8.5 8.5 0 1 1 6 17.5"/><path stroke="#555" stroke-width="1.8" fill="none" d="M2 2.5v6h6"/></svg>
<div class="t" style="left:1313.00px;top:341.95px;font-size:11px;font-weight:normal;color:#333;letter-spacing:0.500px;">Reset</div>
<div class="a" style="left:1301px;top:405px;width:56px;height:102px;border:1px solid #e2e2e2;border-radius:4px;background:#fff;overflow:hidden"><div class="a" style="left:0;top:50px;width:56px;height:52px;background:#f6f6f6;border-top:1px solid #e2e2e2"></div></div>
<svg style="left:1322px;top:420px" width="14" height="21" viewBox="0 0 14 21"><rect x="1" y="1" width="12" height="19" rx="2" stroke="#555" stroke-width="1.8" fill="none"/><path d="M6 16.5h2" stroke="#555" stroke-width="1.6"/></svg>
<svg style="left:1319px;top:472px" width="20" height="19" viewBox="0 0 20 19"><rect x="1" y="1" width="18" height="12" rx="1" fill="none" stroke="#3d6de0" stroke-width="1.8"/><path d="M10 13v4M5 17.5h10" stroke="#3d6de0" stroke-width="1.8"/></svg>
<div class="t" style="left:1306.60px;top:515.95px;font-size:11px;font-weight:normal;color:#333;letter-spacing:0.783px;">Preview</div>
<svg style="left:1314px;top:578px" width="30" height="30" viewBox="0 0 30 30"><g fill="none" stroke="#555" stroke-width="1.6"><rect x="7" y="6" width="12.6" height="5.8" rx="2.9"/><ellipse cx="13.2" cy="8.9" rx="1.6" ry="2.6" stroke-width="1.3"/><path stroke-width="1.1" d="M9 6.8c-.7.6-.7 3.6 0 4.2M17.4 6.8c.7.6.7 3.6 0 4.2"/><path d="M19.7 9h2.8a1 1 0 0 1 1 1v5.4a1 1 0 0 1-1 1H14a1 1 0 0 0-1 1v2.3"/><rect x="11" y="19.7" width="4" height="6" rx="2"/></g></svg>
<div class="t" style="left:1308.30px;top:610.85px;font-size:11px;font-weight:normal;color:#333;letter-spacing:0.340px;">Themes</div>
<svg style="left:1279px;top:675px" width="66" height="66" viewBox="0 0 66 66"><circle cx="33" cy="33" r="33" fill="rgba(40,75,160,0.55)"/>
<ellipse cx="47.1" cy="17.6" rx="7" ry="5" fill="#d4d4da"/><path d="M45 21.5l5 1.5-3 1.5z" fill="#d4d4da"/><g fill="#1a2450"><circle cx="43.3" cy="17.4" r="1.1"/><circle cx="47.2" cy="17.4" r="1.1"/><circle cx="50.9" cy="17.4" r="1.1"/></g>
<path d="M14 31.5a3 3 0 0 1 3-2v10a3 3 0 0 1-3-2z" fill="#3592f2"/><path d="M52.5 31.5a3 3 0 0 0-3-2v10a3 3 0 0 0 3-2z" fill="#3592f2"/>
<circle cx="33.1" cy="16.8" r="2.1" fill="#3aa4f4"/><rect x="32.3" y="18.5" width="1.6" height="3.5" fill="#1a1a2a"/><path d="M28.5 23.8c1-1.5 2.5-2 4.6-2s3.6.5 4.6 2z" fill="#3592f2"/>
<rect x="16.6" y="23.1" width="32.6" height="23.1" rx="11" fill="#ececee"/>
<path d="M33 23.1h5.2a11 11 0 0 1 11 11v1a11 11 0 0 1-11 11H33z" fill="#d9d9dd"/>
<path d="M31 46l10-0.5-9.5 4z" fill="#dcdce0"/>
<rect x="20.6" y="26.6" width="25.5" height="15.5" rx="7" fill="#0e1a4c"/>
<path d="M26 42l12-15.4h2.5L28.5 42z" fill="#2a3a78" opacity=".8"/>
<rect x="25.1" y="31.1" width="4" height="7" rx="2" fill="#35b8f6"/><rect x="37.3" y="31.1" width="4.2" height="7" rx="2" fill="#35b8f6"/>
</svg>
<div class="a" style="left:530px;top:704px;width:100px;height:40px;background:#fafafa;border:1px solid #c8c8c8;border-radius:4px"></div>
<div class="t" style="left:549.70px;top:716.70px;font-size:14px;font-weight:normal;color:#333;letter-spacing:0.757px;">Previous</div>
<div class="a" style="left:635px;top:705px;width:98px;height:38px;background:#2f4fb5;border-radius:4px"></div>
<div class="t" style="left:667.00px;top:716.40px;font-size:14px;font-weight:normal;color:#fff;letter-spacing:1.333px;-webkit-text-stroke:0.25px #fff;">Next</div>
<div class="a" style="left:739px;top:705px;width:98px;height:38px;background:#2f4fb5;border-radius:4px"></div>
<div class="t" style="left:760.00px;top:716.40px;font-size:14px;font-weight:normal;color:#fff;letter-spacing:0.833px;-webkit-text-stroke:0.25px #fff;">Preview</div>
</body></html>
